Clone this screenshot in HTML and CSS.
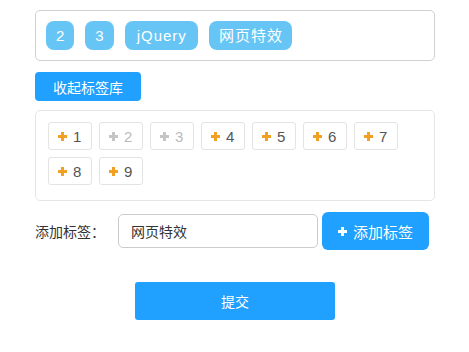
FILE: index.html
```
<!DOCTYPE html>
<html lang="zh-CN">
<head>
	<meta charset="utf-8" />
	<title>标签选择</title>
	<link rel="stylesheet" href="styles.css">
</head>
<body>
    <div class="wrap">
        <!-- selected tags -->
        <div class="chosen">
            <span class="tag">2</span><span class="tag">3</span><span class="tag">jQuery</span><span class="tag">网页特效</span>
        </div>

        <button class="btn btn-toggle">收起标签库</button>

        <!-- tag library -->
        <div class="library">
            <span class="item"><i class="plus"></i>1</span>
            <span class="item disabled"><i class="plus"></i>2</span>
            <span class="item disabled"><i class="plus"></i>3</span>
            <span class="item"><i class="plus"></i>4</span>
            <span class="item"><i class="plus"></i>5</span>
            <span class="item"><i class="plus"></i>6</span>
            <span class="item"><i class="plus"></i>7</span>
            <span class="item"><i class="plus"></i>8</span>
            <span class="item"><i class="plus"></i>9</span>
        </div>

        <div class="add-row">
            <label class="add-label">添加标签：</label>
            <input class="add-input" type="text" value="网页特效">
            <button class="btn btn-add"><i class="plus"></i>添加标签</button>
        </div>

        <div class="submit-row">
            <button class="btn btn-submit">提交</button>
        </div>
    </div>
</body>
</html>
```

FILE: styles.css
```
body {
    margin:0;
    background:#fff;
    font-family:"Liberation Sans", "Noto Sans CJK SC", sans-serif;
    font-size:14px;
    color:#333;
}

.wrap {
    width:400px;
    margin-left:35px;
    padding-top:10px;
}

/*Selected tags*/
.chosen {
    display:flex;
    gap:11px;
    padding:10px;
    border:1px solid #d0d0d0;
    border-radius:5px;
}
.tag {
    height:29px;
    padding:0 9px 0 10px;
    line-height:29px;
    font-size:15px;
    letter-spacing:1px;
    color:#fff;
    background:#66c5f5;
    border-radius:8px;
}
.tag:nth-child(3) {
    padding:0 11px 0 12px;
}

/*Buttons*/
.btn {
    border:0;
    padding:0;
    color:#fff;
    background:#20a0ff;
    font-family:inherit;
    cursor:pointer;
}
.btn-toggle {
    display:block;
    width:106px;
    height:29px;
    margin-top:11px;
    font-size:14px;
    border-radius:4px;
}

/*Tag library*/
.library {
    display:flex;
    flex-wrap:wrap;
    gap:7px;
    margin-top:9px;
    padding:11px 12px 15px;
    border:1px solid #e6e6e6;
    border-radius:5px;
}
.item {
    display:flex;
    align-items:center;
    box-sizing:border-box;
    width:44px;
    height:28px;
    padding-left:9px;
    font-size:15px;
    color:#555;
    border:1px solid #e3e3e3;
    border-radius:3px;
}
.item.disabled {
    color:#bbb;
}

/*Plus icon*/
.plus {
    position:relative;
    display:inline-block;
    width:9px;
    height:9px;
    margin-right:6px;
}
.plus:before,
.plus:after {
    content:'';
    position:absolute;
    background:#f2a024;
}
.plus:before {
    left:0;
    top:3px;
    width:9px;
    height:3px;
}
.plus:after {
    left:3px;
    top:0;
    width:3px;
    height:9px;
}
.item.disabled .plus:before,
.item.disabled .plus:after {
    background:#c4c4c4;
}
.btn-add .plus:before,
.btn-add .plus:after {
    background:#fff;
}

/*Add row*/
.add-row {
    display:flex;
    align-items:center;
    margin-top:11px;
}
.add-label {
    width:83px;
    font-family:"Noto Sans CJK SC", sans-serif;
    font-size:14px;
    color:#333;
}
.add-input {
    box-sizing:border-box;
    width:200px;
    height:34px;
    padding:0 12px;
    border:1px solid #ccc;
    border-radius:5px;
    font-family:"Noto Sans CJK SC", sans-serif;
    font-size:14px;
    color:#333;
    outline:none;
}
.btn-add {
    display:flex;
    align-items:center;
    justify-content:center;
    width:107px;
    height:38px;
    margin-left:4px;
    font-size:15px;
    border-radius:6px;
}

/*Submit*/
.submit-row {
    display:flex;
    justify-content:center;
    margin-top:32px;
}
.btn-submit {
    width:200px;
    height:38px;
    font-size:14px;
    border-radius:3px;
}
```
